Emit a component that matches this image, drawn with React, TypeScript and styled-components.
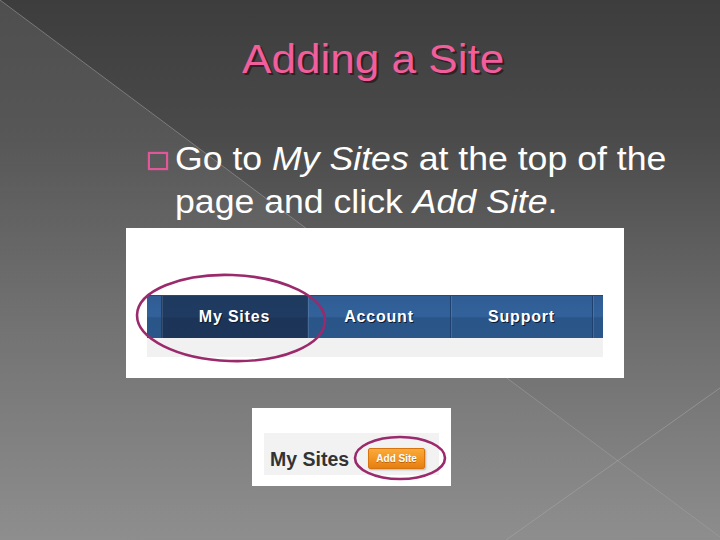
import React from "react";
import styled, { createGlobalStyle } from "styled-components";

const Global = createGlobalStyle`
  html, body { margin: 0; padding: 0; background: #3c3c3c; }
  #root { width: 720px; height: 540px; }
`;

const Slide = styled.div`
  position: relative;
  width: 720px;
  height: 540px;
  overflow: hidden;
  background: linear-gradient(180deg, #3d3d3d 0%, #4a4a4a 25%, #6c6c6c 60%, #8d8d8d 100%);
  font-family: "Liberation Sans", Arial, sans-serif;
  padding-top: 35px;
  box-sizing: border-box;
`;

const Backdrop = styled.svg`
  position: absolute;
  inset: 0;
  width: 720px;
  height: 540px;
  pointer-events: none;
`;

const Content = styled.div`
  position: relative;
  display: flex;
  flex-direction: column;
`;

const Title = styled.h1`
  margin: 0 0 0 242px;
  font-size: 41px;
  line-height: 48px;
  height: 48px;
  font-weight: normal;
  color: #f25e9c;
  text-shadow: 2px 2px 0 #2e2226;
  white-space: nowrap;
`;

const Wide = styled.span<{ $k: number }>`
  display: inline-block;
  transform: scaleX(${(p) => p.$k});
  transform-origin: left center;
`;

const Bullet = styled.div`
  display: flex;
  margin: 54px 0 0 148px;
`;

const Square = styled.span`
  flex: none;
  width: 20px;
  height: 18px;
  margin-top: 15px;
  box-sizing: border-box;
  border: 2px solid #e2569a;
  box-shadow: 0 0 2px rgba(240, 90, 150, 0.5);
`;

const BodyText = styled.p`
  margin: 0 0 0 7px;
  font-size: 33px;
  line-height: 43px;
  color: #ffffff;
  white-space: nowrap;
  em { font-style: italic; }
`;

const Shot = styled.div<{ $left: number; $top: number; $w: number; $h: number }>`
  position: relative;
  margin: ${(p) => p.$top}px 0 0 ${(p) => p.$left}px;
  width: ${(p) => p.$w}px;
  height: ${(p) => p.$h}px;
  background: #ffffff;
  box-sizing: border-box;
`;

const NavWrap = styled.div`
  margin: 67px 0 0 21px;
  width: 456px;
`;

const NavBar = styled.div`
  display: flex;
  height: 43px;
  background: linear-gradient(180deg, #2f5c93 0%, #33629b 48%, #2a5588 52%, #2b5689 100%);
  border-top: 1px solid #24497a;
  box-sizing: border-box;
`;

const Tab = styled.div<{ $w: number; $active?: boolean }>`
  flex: none;
  width: ${(p) => p.$w}px;
  display: flex;
  align-items: center;
  justify-content: center;
  box-sizing: border-box;
  border-left: 1px solid #1f4170;
  box-shadow: inset 1px 0 0 rgba(255, 255, 255, 0.12);
  background: ${(p) =>
    p.$active
      ? "linear-gradient(180deg, #1f3a5f 0%, #203b61 50%, #1c3457 52%, #1d3558 100%)"
      : "transparent"};
  &:first-child { border-left: none; box-shadow: none; }
`;

const TabLabel = styled.span`
  font-family: "Liberation Sans", Arial, sans-serif;
  font-weight: bold;
  font-size: 16px;
  letter-spacing: 0.8px;
  color: #ffffff;
  text-shadow: 1px 1px 0 #0b1a30;
`;

const SubStrip = styled.div`
  height: 19px;
  background: #f1f1f2;
`;

const Panel = styled.div`
  margin: 25px 0 0 12px;
  width: 175px;
  height: 42px;
  padding: 9px 0 0 6px;
  box-sizing: border-box;
  background: #f2f2f2;
  display: flex;
  align-items: center;
`;

const PanelTitle = styled.span`
  font-family: "Liberation Sans", Arial, sans-serif;
  font-weight: bold;
  font-size: 19.5px;
  line-height: 20px;
  color: #333333;
`;

const AddButton = styled.div`
  margin-left: 19px;
  width: 57px;
  height: 21px;
  border-radius: 2px;
  background: linear-gradient(180deg, #f9ab3a 0%, #f39522 50%, #e57f12 100%);
  border: 1px solid #d57410;
  box-sizing: border-box;
  box-shadow: 1px 1px 2px rgba(0, 0, 0, 0.25);
  display: flex;
  align-items: center;
  justify-content: center;
  font-family: "Liberation Sans", Arial, sans-serif;
  font-weight: bold;
  font-size: 10px;
  color: #ffffff;
  text-shadow: 0 1px 0 rgba(150, 70, 0, 0.6);
`;

const Ring = styled.svg`
  position: absolute;
  left: 0;
  top: 0;
  width: 100%;
  height: 100%;
  overflow: visible;
  pointer-events: none;
`;

function Highlight({ cx, cy, rx, ry, rot = 0 }: { cx: number; cy: number; rx: number; ry: number; rot?: number }) {
  return (
    <Ring>
      <ellipse
        cx={cx}
        cy={cy}
        rx={rx}
        ry={ry}
        transform={`rotate(${rot} ${cx} ${cy})`}
        fill="none"
        stroke="#9a2a6b"
        strokeWidth={2.6}
      />
    </Ring>
  );
}

const tabs = [
  { label: "", w: 14 },
  { label: "My Sites", w: 146, active: true },
  { label: "Account", w: 143 },
  { label: "Support", w: 142 },
  { label: "", w: 11 },
];

export default function App() {
  return (
    <>
      <Global />
      <Slide>
        <Backdrop viewBox="0 0 720 540">
          <defs>
            <linearGradient id="tri" x1="0" y1="0" x2="0" y2="1">
              <stop offset="0" stopColor="#ffffff" stopOpacity="0.09" />
              <stop offset="1" stopColor="#ffffff" stopOpacity="0.01" />
            </linearGradient>
          </defs>
          <polygon points="0,0 720,537 0,540" fill="url(#tri)" />
          <line x1="0" y1="0" x2="720" y2="537" stroke="#a0a0a0" strokeOpacity="0.55" strokeWidth="1" />
          <line x1="720" y1="388" x2="506" y2="540" stroke="#a8a8a8" strokeOpacity="0.55" strokeWidth="1" />
        </Backdrop>
        <Content>
          <Title>
            <Wide $k={1.075}>Adding a Site</Wide>
          </Title>
          <Bullet>
            <Square />
            <BodyText>
              <Wide $k={1.08}>
                Go to <em>My Sites</em> at the top of the
                <br />
                page and click <em>Add Site</em>.
              </Wide>
            </BodyText>
          </Bullet>
          <Shot $left={126} $top={5} $w={498} $h={150}>
            <NavWrap>
              <NavBar>
                {tabs.map((t, i) => (
                  <Tab key={i} $w={t.w} $active={t.active}>
                    {t.label && <TabLabel>{t.label}</TabLabel>}
                  </Tab>
                ))}
              </NavBar>
              <SubStrip />
            </NavWrap>
            <Highlight cx={105} cy={90} rx={94} ry={43} rot={2} />
          </Shot>
          <Shot $left={252} $top={30} $w={199} $h={78}>
            <Panel>
              <PanelTitle>My Sites</PanelTitle>
              <AddButton>Add Site</AddButton>
            </Panel>
            <Highlight cx={148} cy={50} rx={45} ry={21} />
          </Shot>
        </Content>
      </Slide>
    </>
  );
}
